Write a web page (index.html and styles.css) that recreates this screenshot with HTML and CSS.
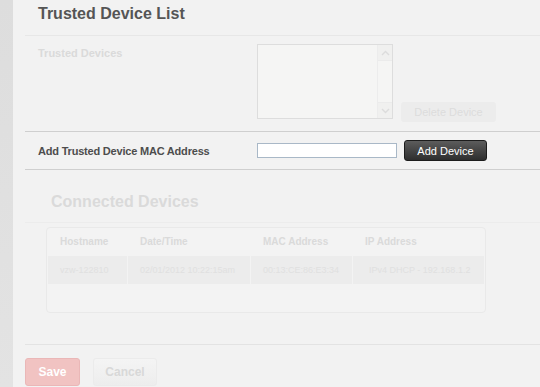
FILE: index.html
```html
<!DOCTYPE html>
<html lang="en">
<head>
    <meta charset="UTF-8">
    <meta name="viewport" content="width=device-width, initial-scale=1.0">
    <title>Trusted Device List</title>
    <link rel="stylesheet" href="styles.css">
</head>
<body>
    <div class="page">
        <aside class="rail"></aside>
        <main class="content">
            <h1 class="title">Trusted Device List</h1>

            <section class="section section-faded">
                <div class="row row-list">
                    <label class="label label-faded">Trusted Devices</label>
                    <div class="controls controls-list">
                        <div class="listbox">
                            <div class="scrollbar">
                                <div class="scroll-btn">
                                    <svg width="9" height="6" viewBox="0 0 9 6"><path d="M1 5 L4.5 1.5 L8 5" fill="none" stroke="#dcdcdc" stroke-width="1.4"/></svg>
                                </div>
                                <div class="scroll-track"></div>
                                <div class="scroll-btn">
                                    <svg width="9" height="6" viewBox="0 0 9 6"><path d="M1 1 L4.5 4.5 L8 1" fill="none" stroke="#dcdcdc" stroke-width="1.4"/></svg>
                                </div>
                            </div>
                        </div>
                        <button type="button" class="btn btn-disabled" disabled>Delete Device</button>
                    </div>
                </div>
            </section>

            <section class="section">
                <form class="row row-add" id="addForm">
                    <label class="label" for="macAddress">Add Trusted Device MAC Address</label>
                    <div class="controls controls-add">
                        <input type="text" id="macAddress" class="mac-input">
                        <button type="submit" class="btn btn-dark">Add Device</button>
                    </div>
                </form>
            </section>

            <section class="section connected">
                <div class="connected-head">
                    <h2 class="subtitle">Connected Devices</h2>
                </div>
                <div class="table-box">
                    <table class="devices">
                        <colgroup>
                            <col style="width: 79px">
                            <col style="width: 122px">
                            <col style="width: 101px">
                            <col>
                        </colgroup>
                        <thead>
                            <tr>
                                <th>Hostname</th>
                                <th>Date/Time</th>
                                <th>MAC Address</th>
                                <th>IP Address</th>
                            </tr>
                        </thead>
                        <tbody>
                            <tr>
                                <td>vzw-122810</td>
                                <td>02/01/2012 10:22:15am</td>
                                <td>00:13:CE:86:E3:34</td>
                                <td class="ip">IPv4 DHCP - 192.168.1.2</td>
                            </tr>
                        </tbody>
                    </table>
                </div>
            </section>

            <section class="section actions">
                <button type="button" class="btn btn-save">Save</button>
                <button type="button" class="btn btn-cancel">Cancel</button>
            </section>
        </main>
    </div>
</body>
</html>
```

FILE: styles.css
```css
body {
    margin: 0;
    padding: 0;
    font-family: "Liberation Sans", Arial, sans-serif;
    background-color: #f2f2f2;
}
.page {
    display: flex;
    min-height: 387px;
}
.rail {
    width: 13px;
    flex-shrink: 0;
    background: linear-gradient(to bottom, #dddddd, #e3e3e3);
}
.content {
    flex: 1;
    padding-left: 12px;
    background-color: #f2f2f2;
}
.title {
    margin: 0;
    padding: 4px 0 11px 13px;
    font-size: 16px;
    line-height: 20px;
    font-weight: bold;
    color: #555555;
}
.section {
    border-top: 1px solid #cfcfcf;
}
.section-faded {
    border-top-color: #e7e7e7;
    padding: 8px 0 9px;
}
.row {
    display: flex;
    padding-left: 13px;
    margin: 0;
}
.label {
    width: 219px;
    flex-shrink: 0;
    font-size: 11px;
    line-height: 14px;
    font-weight: bold;
    color: #4d4d4d;
    letter-spacing: -0.2px;
}
.label-faded {
    color: #dadada;
    margin-top: 2px;
    letter-spacing: 0;
}
.controls {
    display: flex;
}
.controls-list {
    align-items: flex-end;
    gap: 8px;
}
.listbox {
    width: 134px;
    height: 73px;
    margin-bottom: 3px;
    border: 1px solid #dddddd;
    background-color: #f5f5f4;
    display: flex;
    justify-content: flex-end;
}
.scrollbar {
    width: 14px;
    display: flex;
    flex-direction: column;
    border-left: 1px solid #ececec;
}
.scroll-btn {
    height: 15px;
    display: flex;
    align-items: center;
    justify-content: center;
    background-color: #f0f0ef;
}
.scroll-track {
    flex: 1;
    border-top: 1px solid #ebebeb;
    border-bottom: 1px solid #ebebeb;
}
.btn {
    font-family: "Liberation Sans", Arial, sans-serif;
    cursor: pointer;
}
.btn-disabled {
    width: 95px;
    height: 20px;
    padding: 0;
    border: none;
    border-radius: 3px;
    background-color: #ececec;
    color: #dcdcdc;
    font-size: 11px;
}
.row-add {
    align-items: center;
    padding-top: 8px;
    padding-bottom: 8px;
}
.controls-add {
    align-items: center;
    gap: 7px;
}
.mac-input {
    width: 140px;
    height: 15px;
    box-sizing: border-box;
    margin: 0;
    padding: 0 3px;
    border: 1px solid #a9b8c7;
    background-color: #ffffff;
    font-size: 11px;
}
.btn-dark {
    width: 83px;
    height: 21px;
    padding: 0;
    border: 1px solid #1c1c1c;
    border-radius: 3px;
    background: linear-gradient(to bottom, #5c5c5c, #2e2e2e);
    color: #ffffff;
    font-size: 11px;
}
.connected {
    padding-bottom: 31px;
}
.connected-head {
    padding: 22px 0 10px 26px;
    border-bottom: 1px solid #ececec;
    margin-bottom: 4px;
}
.subtitle {
    margin: 0;
    font-size: 16px;
    line-height: 20px;
    font-weight: bold;
    color: #dadada;
}
.table-box {
    width: 438px;
    height: 84px;
    margin-left: 21px;
    border: 1px solid #e9e9e9;
    border-radius: 4px;
    background-color: #f3f3f3;
}
.devices {
    border-collapse: separate;
    border-spacing: 1px 0;
    table-layout: fixed;
    width: 438px;
}
.devices th {
    height: 28px;
    padding: 0 0 0 12px;
    text-align: left;
    font-size: 10px;
    line-height: 12px;
    font-weight: bold;
    color: #dadada;
}
.devices td {
    height: 28px;
    padding: 0 0 0 12px;
    background-color: #ececec;
    font-size: 9px;
    color: #e0e0e0;
    white-space: nowrap;
    overflow: hidden;
}
.devices td.ip {
    padding-left: 16px;
}
.actions {
    display: flex;
    gap: 13px;
    padding-top: 13px;
    border-top-color: #e3e3e3;
}
.btn-save,
.btn-cancel {
    height: 28px;
    padding: 0;
    border-radius: 3px;
    font-size: 12px;
    font-weight: bold;
}
.btn-save {
    width: 55px;
    border: 1px solid #eab7b7;
    background-color: #f1c3c2;
    color: #ffffff;
}
.btn-cancel {
    width: 64px;
    border: 1px solid #ebebeb;
    background: linear-gradient(to bottom, #f4f4f4, #ededed);
    color: #d8d8d8;
}
```
